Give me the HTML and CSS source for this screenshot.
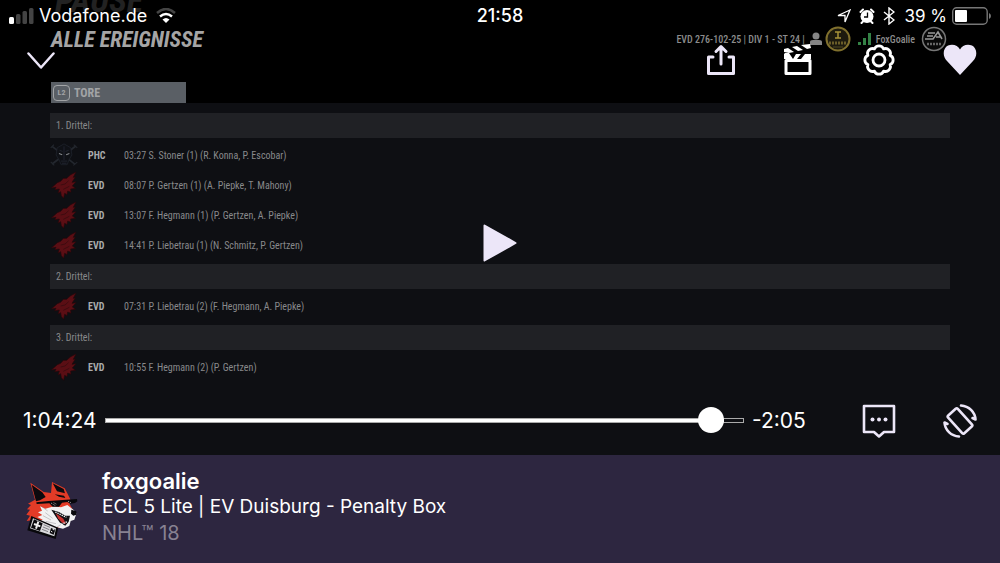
FILE: index.html
```html
<!DOCTYPE html>
<html lang="de">
<head>
  <meta charset="UTF-8" />
  <meta name="viewport" content="width=device-width, initial-scale=1" />
  <title>foxgoalie - NHL 18</title>
  <link rel="stylesheet" href="styles.css">
</head>

<body>
  <!-- shared shapes -->
  <svg class="defs" aria-hidden="true">
    <symbol id="dragon" viewBox="36 182 80 84">
      <path fill="#5a0e14" stroke="#25070b" stroke-width="2" d="M112 185 96 193 84 204 74 204 66 213 56 217 38 233 52 231 48 238 62 236 58 248 66 244 68 256 75 264 78 249 85 253 87 242 97 246 96 236 111 234 101 227 112 214 100 216 110 200 104 201Z"/>
      <path fill="none" stroke="#300a0e" stroke-width="2" d="M66 224 79 221 90 211M74 237 92 228"/>
    </symbol>
    <symbol id="skull" viewBox="36 98 78 68">
      <path stroke="#23272e" stroke-width="5" fill="none" d="M42 108 106 158M108 107 42 157"/>
      <path stroke="#23272e" stroke-width="3" fill="none" d="M38 112 47 103M102 103 112 112M38 151 48 161M101 161 112 152"/>
      <path fill="#0f1116" stroke="#20242e" stroke-width="2" d="M56 112 75 101 94 112 97 132 89 145 84 159H67L61 145 53 132Z"/>
      <path stroke="#85888c" stroke-width="3" d="M61 128 70 131M81 131 90 128"/>
      <path stroke="#272b38" stroke-width="2" d="M75 108V146M67 149H84M69 155H82M63 119 71 122M79 122 88 119"/>
    </symbol>
  </svg>

  <main class="player">
    <div class="video">
      <header class="game-header">
        <p class="ghost">PAUSE</p>
        <div class="title-row">
          <h1>ALLE EREIGNISSE</h1>
          <div class="gamer">
            <span>EVD 276-102-25 | DIV 1 - ST 24 |</span>
            <svg class="person" viewBox="0 0 14 14"><circle cx="7" cy="4" r="3.5"/><path d="M1 13V10Q1 8 4 8H10Q13 8 13 10V13Z"/></svg>
            <svg class="badge" viewBox="0 0 26 26"><circle cx="13" cy="13" r="11.5" fill="#1d1a0e" stroke="#80702d" stroke-width="2"/><path fill="none" stroke="#a79339" stroke-width="1.5" d="M10 6H16M13 6V12M10 12H16"/><path stroke="#6a5d28" stroke-width="3" stroke-dasharray="2 1" d="M4 17H22"/><path stroke="#514820" d="M8 21H18"/></svg>
            <svg class="signal" viewBox="0 0 14 12"><path fill="#348246" d="M0 9H3V12H0ZM5 5H8V12H5ZM10 0H13V12H10Z"/></svg>
            <span>FoxGoalie</span>
            <svg class="badge ea" viewBox="0 0 26 26"><circle cx="13" cy="13" r="11.5" fill="#090909" stroke="#777" stroke-width="1.5"/><path fill="none" stroke="#999" stroke-width="1.6" d="M7 7H14M6 10H12M4 13H12L17 6 21 13M15 11H20"/><path stroke="#666" stroke-width="2.5" stroke-dasharray="2 1" d="M6 18H21"/></svg>
          </div>
        </div>
        <div class="tab"><span class="key">L2</span>TORE</div>
      </header>

      <section class="events">
        <h2>1. Drittel:</h2>
        <ul>
          <li><svg><use href="#skull"/></svg><b>PHC</b><span>03:27 S. Stoner (1) (R. Konna, P. Escobar)</span></li>
          <li><svg><use href="#dragon"/></svg><b>EVD</b><span>08:07 P. Gertzen (1) (A. Piepke, T. Mahony)</span></li>
          <li><svg><use href="#dragon"/></svg><b>EVD</b><span>13:07 F. Hegmann (1) (P. Gertzen, A. Piepke)</span></li>
          <li><svg><use href="#dragon"/></svg><b>EVD</b><span>14:41 P. Liebetrau (1) (N. Schmitz, P. Gertzen)</span></li>
        </ul>
        <h2>2. Drittel:</h2>
        <ul>
          <li><svg><use href="#dragon"/></svg><b>EVD</b><span>07:31 P. Liebetrau (2) (F. Hegmann, A. Piepke)</span></li>
        </ul>
        <h2>3. Drittel:</h2>
        <ul>
          <li><svg><use href="#dragon"/></svg><b>EVD</b><span>10:55 F. Hegmann (2) (P. Gertzen)</span></li>
        </ul>
      </section>
    </div>

    <div class="overlay">
      <div class="status-bar">
        <div class="status-left">
          <svg class="cell" viewBox="0 0 25 16"><rect y="9" width="5" height="7" rx="1.5" fill="#fff"/><g fill="#444"><rect x="7" y="6" width="4.5" height="10" rx="1.5"/><rect x="13.5" y="3" width="4.5" height="13" rx="1.5"/><rect x="20" width="4.5" height="16" rx="1.5"/></g></svg>
          <span>Vodafone.de</span>
          <svg class="wifi" viewBox="0 0 20 15"><g fill="none" stroke-width="2.5"><path stroke="#444" d="M1 5Q10-3 19 5"/><path stroke="#fff" d="M4 8.5Q10 3.5 16 8.5"/></g><path fill="#fff" d="M6.5 11.5Q10 8.5 13.5 11.5L10 15Z"/></svg>
        </div>
        <time class="clock">21:58</time>
        <div class="status-right">
          <svg class="location" viewBox="0 0 14 14"><path fill="none" stroke="#fff" stroke-width="1.3" d="M13 1 1 6.5 8 6.5 8 13Z"/></svg>
          <svg class="alarm" viewBox="0 0 16 16"><circle cx="8" cy="8.5" r="6.5" fill="#fff"/><path stroke="#fff" stroke-width="2" stroke-linecap="round" d="M1.5 4 4 1.5M14.5 4 12 1.5M4 13.5 2.5 15M12 13.5 13.5 15"/><path fill="none" stroke="#000" stroke-width="1.3" d="M8.5 4.5V9H5"/></svg>
          <svg class="bluetooth" viewBox="0 0 12 18"><path fill="none" stroke="#fff" stroke-width="1.4" d="M1 5 11 13 6 17V1L11 5 1 13"/></svg>
          <span>39 %</span>
          <svg class="battery" viewBox="0 0 39 18"><rect x=".7" y=".7" width="34.5" height="16.5" rx="4" fill="none" stroke="#777" stroke-width="1.4"/><path fill="#777" d="M37 6Q39 7 39 9T37 12Z"/><rect x="3" y="3" width="12" height="12" rx="1" fill="#fff"/></svg>
        </div>
      </div>

      <div class="top-controls">
        <button class="close" aria-label="Schließen"><svg width="28" height="20" viewBox="0 0 28 20"><path d="M1.5 3.500 14 17.500 26.500 3.500" stroke-width="2.500"/></svg></button>
        <button class="share" aria-label="Teilen"><svg width="30" height="32" viewBox="0 0 30 32"><path d="M7 13H2.500V29.500H27.500V13H23M15 20V3M10 7.500 15 2.500 20 7.500" stroke-width="3"/></svg></button>
        <button aria-label="Clip erstellen"><svg class="bright" width="28" height="32" viewBox="0 0 28 32"><path d="M2 16.500H26V29.500H2Z" stroke-width="3"/><path fill="#fff" stroke="none" d="M0 10 1 9 5 9 9 15H0ZM12 10H17L13 15H9ZM21 10H27V15H17ZM0 5 4 4 10 8 5 9 0 8ZM8 3 13 2 19 6 14 7ZM17 1 26 0 27 4 23 5Z"/></svg></button>
        <button aria-label="Einstellungen"><svg class="bright" width="32" height="32" viewBox="0 0 32 32"><path stroke-width="2.800" d="M27.1 20.6A5 5 0 0 1 20.6 27.1 5 5 0 0 1 11.400 27.100 5 5 0 0 1 4.900 20.600 5 5 0 0 1 4.900 11.400 5 5 0 0 1 11.400 4.900 5 5 0 0 1 20.600 4.900 5 5 0 0 1 27.100 11.400 5 5 0 0 1 27.100 20.600Z"/><circle cx="16" cy="16" r="6" stroke-width="2.800"/></svg></button>
        <button aria-label="Folgen"><svg width="34" height="32" viewBox="0 0 34 32"><path fill="#ece6f8" stroke="none" d="M17 31 4 17C-1 12 0 4 5 1.500 10-.500 15 1.500 17 5.500 19 1.500 24-.500 29 1.500 34 4 35 12 30 17Z"/></svg></button>
      </div>

      <button class="play" aria-label="Abspielen"><svg width="34" height="38" viewBox="0 0 34 38"><path fill="#ece6f8" stroke="#ece6f8" stroke-width="2" d="M1.500 1.500 32.500 19 1.500 36.500Z"/></svg></button>

      <div class="seek-bar">
        <label for="seek">1:04:24</label>
        <input id="seek" type="range" min="0" max="3989" value="3864" style="--pos: 96.87%">
        <output for="seek">-2:05</output>
        <div class="seek-buttons">
          <button aria-label="Chat"><svg width="34" height="34" viewBox="0 0 34 34"><path stroke-width="2.600" d="M2 2H32V28H22L17 32.500 12 28H2Z"/><g fill="#ece6f8" stroke="none"><circle cx="10.500" cy="15.500" r="2"/><circle cx="17" cy="15.500" r="2"/><circle cx="23.500" cy="15.500" r="2"/></g></svg></button>
          <button aria-label="Drehen"><svg width="34" height="34" viewBox="0 0 34 34"><rect x="10.500" y="5" width="13" height="24" rx="1.500" transform="rotate(-42 17 17)" stroke-width="2.600"/><path stroke-width="2.600" d="M18 1.500C26 2 32 8 32.500 15.500L29.500 14M16 32.500C8 32 2 26 1.500 18.500L4.500 20"/></svg></button>
        </div>
      </div>
    </div>
  </main>

  <footer class="channel">
    <svg class="avatar" viewBox="30 30 165 180" role="img" aria-label="foxgoalie">
      <path fill="#e33b27" d="M46 38 86 66 108 69 111 36 149 55 157 70 166 88 164 103 175 122 171 145 138 174 98 171 61 158 45 165 48 151 35 153 45 137 34 134 45 119 36 118 48 105 39 101 60 89Z"/>
      <path fill="#0b0a0e" d="M50 44 82 67 92 81 75 91 63 94ZM113 40 146 57 150 70 126 64ZM119 73 147 77 151 84 132 80Z"/>
      <path fill="#f1f1f2" d="M75 109 91 116 117 109 138 112 157 105 177 121 184 131 178 149 167 153 163 168 144 176 119 170 91 168 72 155 83 149 67 141 82 135 69 127 81 122Z"/>
      <path fill="#101014" d="M109 119 132 126 151 137 165 137 161 155 151 167 135 158 123 141Z"/>
      <path fill="#c92f2d" d="M122 130 145 146 153 162 141 158 129 145Z"/>
      <path stroke="#fff" stroke-width="4" stroke-dasharray="4 3" d="M121 126 154 142M139 163 157 155"/>
      <path fill="#08080c" d="M64 97 101 93 186 87 187 94 180 99 166 101 157 96 141 98 132 110 113 110 103 100 65 102ZM169 119 184 124 184 134 175 137 168 131Z"/>
      <path stroke="#aaa" stroke-width="3" stroke-dasharray="3 3" d="M108 99 121 107M116 98 125 103M159 94 168 98"/>
      <path stroke="#6a686e" stroke-width="1" d="M84 137 108 150M91 128 113 145M92 154 123 161M79 109 98 123M125 172 137 164"/>
      <path fill="#08080b" d="M49 138 130 173 122 207 37 181Z"/>
      <path fill="#d9d9dc" d="M54 145 123 175 118 199 45 175Z"/>
      <path fill="#09090c" d="M57 148 83 160 75 183 48 173ZM108 174 121 179 116 194 104 189Z"/>
      <path stroke="#eee" stroke-width="6" d="M57 162 76 169M70 155 63 176"/>
      <path stroke="#55545c" stroke-width="2" d="M86 164 105 172M84 171 103 179M81 178 99 185"/>
      <path stroke="#eee" stroke-width="3" d="M108 184 112 186M113 178 118 180"/>
    </svg>
    <div class="channel-text">
      <strong>foxgoalie</strong>
      <span>ECL 5 Lite | EV Duisburg - Penalty Box</span>
      <span class="game">NHL™ 18</span>
    </div>
  </footer>
</body>
</html>
```
FILE: styles.css
```css
* { box-sizing: border-box; }
html, body { margin: 0; padding: 0; }
body { min-height: 100vh; display: flex; flex-direction: column; background: #2d2640; color: #fff; font-family: Inter, "Liberation Sans", sans-serif; }
.defs { display: none; }
svg { display: block; flex: none; }
h1, h2, p, ul { margin: 0; padding: 0; }
button { border: 0; padding: 0; background: none; cursor: pointer; }

/* video and controls share one grid cell */
.player { flex: 1; display: grid; background: #0e0f13; overflow: hidden; }
.video, .overlay { grid-area: 1 / 1; min-width: 0; }

/* game screen */
.video { font-family: "Roboto Condensed", "Liberation Sans Narrow", "Liberation Sans", sans-serif; color: #88898b; }
.game-header { height: 103px; padding: 0 51px; background: #000; overflow: hidden; }
.ghost { margin-top: -12px; padding-left: 4px; font-size: 34px; line-height: 24px; font-weight: bold; font-style: italic; color: #222; }
.title-row { display: flex; justify-content: space-between; height: 53px; margin-bottom: 17px; }
h1 { padding-top: 10px; font-size: 22px; line-height: 36px; font-style: italic; color: #a5a5a5; white-space: nowrap; }
.gamer { display: flex; align-items: center; height: 26px; margin-top: 14px; margin-right: 2px; font-size: 10px; font-weight: 500; color: #8c8c8c; white-space: nowrap; }
.person { width: 14px; height: 14px; margin-left: 4px; fill: #858585; }
.badge { width: 26px; height: 26px; margin-left: 2px; }
.signal { width: 14px; height: 12px; margin: 0 4px 0 7px; }
.ea { margin-left: 6px; }
.tab { display: flex; align-items: center; gap: 4px; width: 135px; height: 21px; padding-left: 2px; background: #5a5f65; color: #a2a4a6; font-size: 12px; font-weight: bold; }
.key { width: 17px; border: 1px solid #a2a4a6; border-radius: 4px; font-size: 8px; line-height: 14px; text-align: center; }

.events { padding: 6px 50px 0; }
.events h2 { margin: 4px 0 2px; padding-left: 6px; height: 25px; background: #202125; font-size: 10px; line-height: 25px; font-weight: normal; }
.events li { display: grid; grid-template-columns: 38px 36px 1fr; align-items: center; height: 30px; font-size: 10px; list-style: none; }
.events li svg { width: 28px; height: 28px; }
.events b { color: #aaabac; }

/* player controls */
.overlay { display: flex; flex-direction: column; }
.status-bar { display: grid; grid-template-columns: 1fr auto 1fr; align-items: center; height: 31px; padding: 0 9px; font-size: 18px; }
.status-left, .status-right { display: flex; align-items: center; }
.status-right { justify-content: flex-end; }
.cell { width: 25px; height: 16px; margin-right: 5px; }
.wifi { width: 20px; height: 15px; margin-left: 9px; }
.clock { font-weight: 500; }
.location { width: 14px; height: 14px; }
.alarm { width: 16px; height: 16px; margin: 0 8px; }
.bluetooth { width: 12px; height: 18px; margin-right: 9px; }
.battery { width: 39px; height: 18px; margin-left: 5px; }
.status-right span { font-size: 17px; }

.overlay button svg { margin: auto; fill: none; stroke: #ece6f8; stroke-linejoin: round; stroke-linecap: round; }
.overlay button .bright { stroke: #fff; }
.top-controls { display: flex; align-items: center; height: 58px; }
.top-controls button { width: 81px; height: 58px; }
.top-controls .close { margin-right: auto; }
.top-controls .share { width: 72px; }
.play { align-self: center; margin: auto; padding-top: 10px; }

.seek-bar { display: flex; align-items: center; height: 69px; padding-left: 23px; font-size: 21px; }
.seek-bar input { flex: 1; min-width: 0; height: 26px; margin: 0 8px; appearance: none; background: none; }
.seek-bar input::-webkit-slider-runnable-track { height: 5px; border: 1px solid #aaa; background: linear-gradient(to right, #fff var(--pos), transparent var(--pos)) border-box; }
.seek-bar input::-webkit-slider-thumb { appearance: none; width: 26px; height: 26px; margin-top: -12px; border-radius: 50%; background: #fff; }
.seek-bar output { width: 86px; }
.seek-buttons { display: flex; }
.seek-buttons button { width: 81px; height: 58px; }

/* channel info */
.channel { display: flex; height: 108px; padding: 13px 25px; gap: 22px; }
.avatar { width: 55px; height: 60px; margin-top: 12px; }
.channel-text { display: flex; flex-direction: column; font-size: 19px; line-height: 26px; }
.channel-text strong { font-size: 22px; font-weight: 600; }
.channel-text .game { font-size: 20px; color: #888292; }
```
